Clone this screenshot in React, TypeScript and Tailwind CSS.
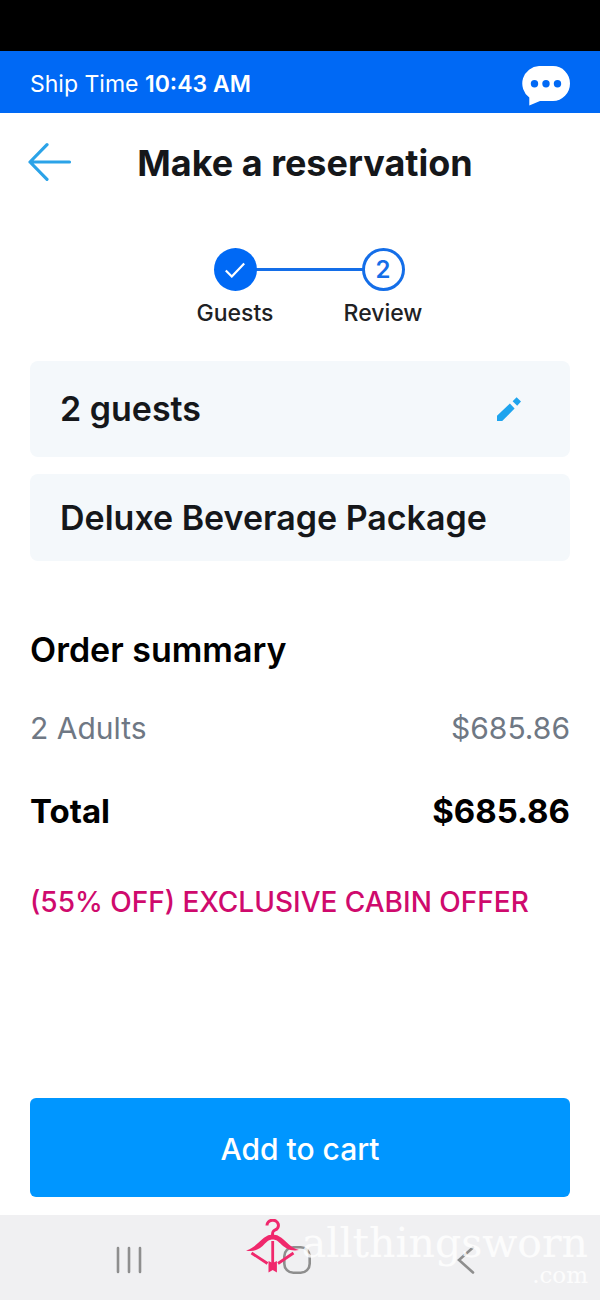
import type { ReactNode } from "react";

function ChatIcon() {
  return (
    <svg viewBox="0 0 48 40" className="h-10 w-12" aria-hidden="true">
      <path d="M17 0h14a17 17.5 0 0 1 0 35H18L7.300 39.500V31.500A17.500 17.500 0 0 1 17 0Z" fill="#fff" />
      <g fill="#0069f5">
        <circle cx="12.500" cy="17.700" r="3.700" />
        <circle cx="24" cy="17.700" r="3.700" />
        <circle cx="35.500" cy="17.700" r="3.700" />
      </g>
    </svg>
  );
}

function BackArrowIcon() {
  return (
    <svg viewBox="0 0 44 40" className="h-10 w-11" fill="none" stroke="#2ba3e8" strokeWidth="3.200" strokeLinecap="round" strokeLinejoin="round" aria-hidden="true">
      <path d="M19 1.700 2 19l17 17.300M2 19h39.500" />
    </svg>
  );
}

function HangerLogo() {
  return (
    <svg viewBox="0 0 54 54" className="h-[54px] w-[54px] shrink-0" fill="none" stroke="#f0286c" aria-hidden="true">
      <path d="M21 6.500a5.700 5.200 0 1 1 7.800 4.700c-1.800.8-2.300 1.400-2.300 5" strokeWidth="3" />
      <path d="M0 31.500C9 28.500 12 23.500 18 18.800q4-3.300 8.700-3.300t8.700 3.300c6 4.700 9 9.700 17.600 12.300-9 1.500-14-2.100-18.600-6.600-3.400-3.200-5-4-7.700-4s-4.300.8-7.700 4C14.400 29.500 9 33.500 0 31.500Z" fill="#f0286c" stroke="none" />
      <path d="M26.700 22v22M5.500 34 21.500 44.500M47.500 34 32 44.500" strokeWidth="2.800" />
      <path d="M22.500 42 26.700 44l4.200-2v11.500l-4.200-2.500-4.200 2.500Z" fill="#f0286c" stroke="none" />
    </svg>
  );
}

function Step({ label, done, children }: { label: string; done?: boolean; children: ReactNode }) {
  return (
    <li className="z-10 flex w-[148px] flex-col items-center">
      <span
        className={
          done
            ? "flex size-[43px] items-center justify-center rounded-full bg-[#0069f5] text-white"
            : "flex size-[43px] items-center justify-center rounded-full border-[3px] border-[#146ee8] bg-white text-2xl font-semibold text-[#146ee8]"
        }
      >
        {children}
      </span>
      <span className="mt-2 text-[23px] leading-7 font-medium text-[#202124]">{label}</span>
    </li>
  );
}

export default function App() {
  return (
    <div className="flex min-h-screen flex-col bg-white font-['Inter',sans-serif] text-[#15171a]">
      <div className="h-[51px] bg-black" />
      <div className="flex h-[62px] items-center justify-between bg-[#0069f5] px-[30px] pt-1 text-white">
        <p className="text-[23px] leading-8">
          Ship Time <strong className="font-semibold">10:43 AM</strong>
        </p>
        <button type="button" aria-label="Chat" className="pt-1">
          <ChatIcon />
        </button>
      </div>

      <header className="flex items-center pt-6 pr-[62px] pl-7">
        <button type="button" aria-label="Back">
          <BackArrowIcon />
        </button>
        <h1 className="flex-1 text-center text-[36px] leading-[52px] font-bold">Make a reservation</h1>
      </header>

      <main className="flex flex-1 flex-col px-[30px]">
        <div className="mt-[59px] flex justify-center">
          <div className="relative ml-[18px]">
            <div className="absolute top-5 left-[74px] h-[3px] w-[148px] bg-[#146ee8]" />
            <ol className="relative flex">
              <Step label="Guests" done>
                <svg viewBox="0 0 20 16" className="h-4 w-5" fill="none" stroke="currentColor" strokeWidth="2.200" aria-hidden="true">
                  <path d="m.8 8.500 6 6L19.200 1.500" />
                </svg>
              </Step>
              <Step label="Review">2</Step>
            </ol>
          </div>
        </div>

        <section className="mt-[34px] flex h-24 items-center justify-between rounded-lg bg-[#f4f8fb] pr-[49px] pl-[30px]">
          <h2 className="text-[34px] leading-10 font-semibold">2 guests</h2>
          <button type="button" aria-label="Edit guests">
            <svg viewBox="0 0 24 24" className="size-6" fill="#1ea4ee" aria-hidden="true">
              <path d="M0 18.800V24h5.200L17.600 11.600 12.900 6.400 0 18.800ZM19.600 .2 24 4.600 20.200 8.800 15.600 4.200Z" />
            </svg>
          </button>
        </section>
        <section className="mt-[17px] flex h-[87px] items-center rounded-lg bg-[#f4f8fb] px-[30px]">
          <h2 className="text-[34px] leading-10 font-semibold">Deluxe Beverage Package</h2>
        </section>

        <h2 className="mt-[69px] text-[34px] leading-10 font-semibold text-black">Order summary</h2>
        <dl>
          <div className="mt-[38px] flex justify-between text-[30px] leading-10 text-[#6f7884]">
            <dt>2 Adults</dt>
            <dd>$685.86</dd>
          </div>
          <div className="mt-[43px] flex justify-between text-[33px] leading-10 font-bold text-black">
            <dt>Total</dt>
            <dd>$685.86</dd>
          </div>
        </dl>
        <p className="mt-[51px] text-[28px] leading-10 font-medium text-[#cf0a6d]">(55% OFF) EXCLUSIVE CABIN OFFER</p>

        <button type="button" className="mt-auto mb-[18px] h-[99px] rounded-md bg-[#0096ff] pt-1 text-[30px] font-medium text-white">
          Add to cart
        </button>
      </main>

      <nav className="relative h-[85px] bg-[#f0f0f2]">
        <div className="grid h-full grid-cols-[258px_78px_1fr] items-center pt-1 pr-1">
          <button type="button" aria-label="Recent apps" className="flex justify-center">
            <svg viewBox="0 0 28 28" className="size-7" stroke="#8e8e8e" strokeWidth="2.600" strokeLinecap="round" aria-hidden="true">
              <path d="M3 2v24M14 2v24M25 2v24" />
            </svg>
          </button>
          <button type="button" aria-label="Home" className="flex justify-center">
            <svg viewBox="0 0 28 28" className="size-7" fill="none" stroke="#8e8e8e" strokeWidth="2.600" aria-hidden="true">
              <rect x="1.300" y="1.300" width="25.400" height="25.400" rx="9" />
            </svg>
          </button>
          <button type="button" aria-label="Previous screen" className="flex justify-center">
            <svg viewBox="0 0 18 28" className="h-7 w-[18px]" fill="none" stroke="#8e8e8e" strokeWidth="2.600" strokeLinecap="round" aria-hidden="true">
              <path d="M16 1.500 2 14l14 12.500" />
            </svg>
          </button>
        </div>
        <div className="pointer-events-none absolute top-1 right-3 flex gap-[2px] text-right font-['DejaVu_Serif',serif] text-white/80">
          <HangerLogo />
          <div className="pt-1">
            <div className="text-[41px] leading-10">allthingsworn</div>
            <div className="text-[23px] leading-6">.com</div>
          </div>
        </div>
      </nav>
    </div>
  );
}
